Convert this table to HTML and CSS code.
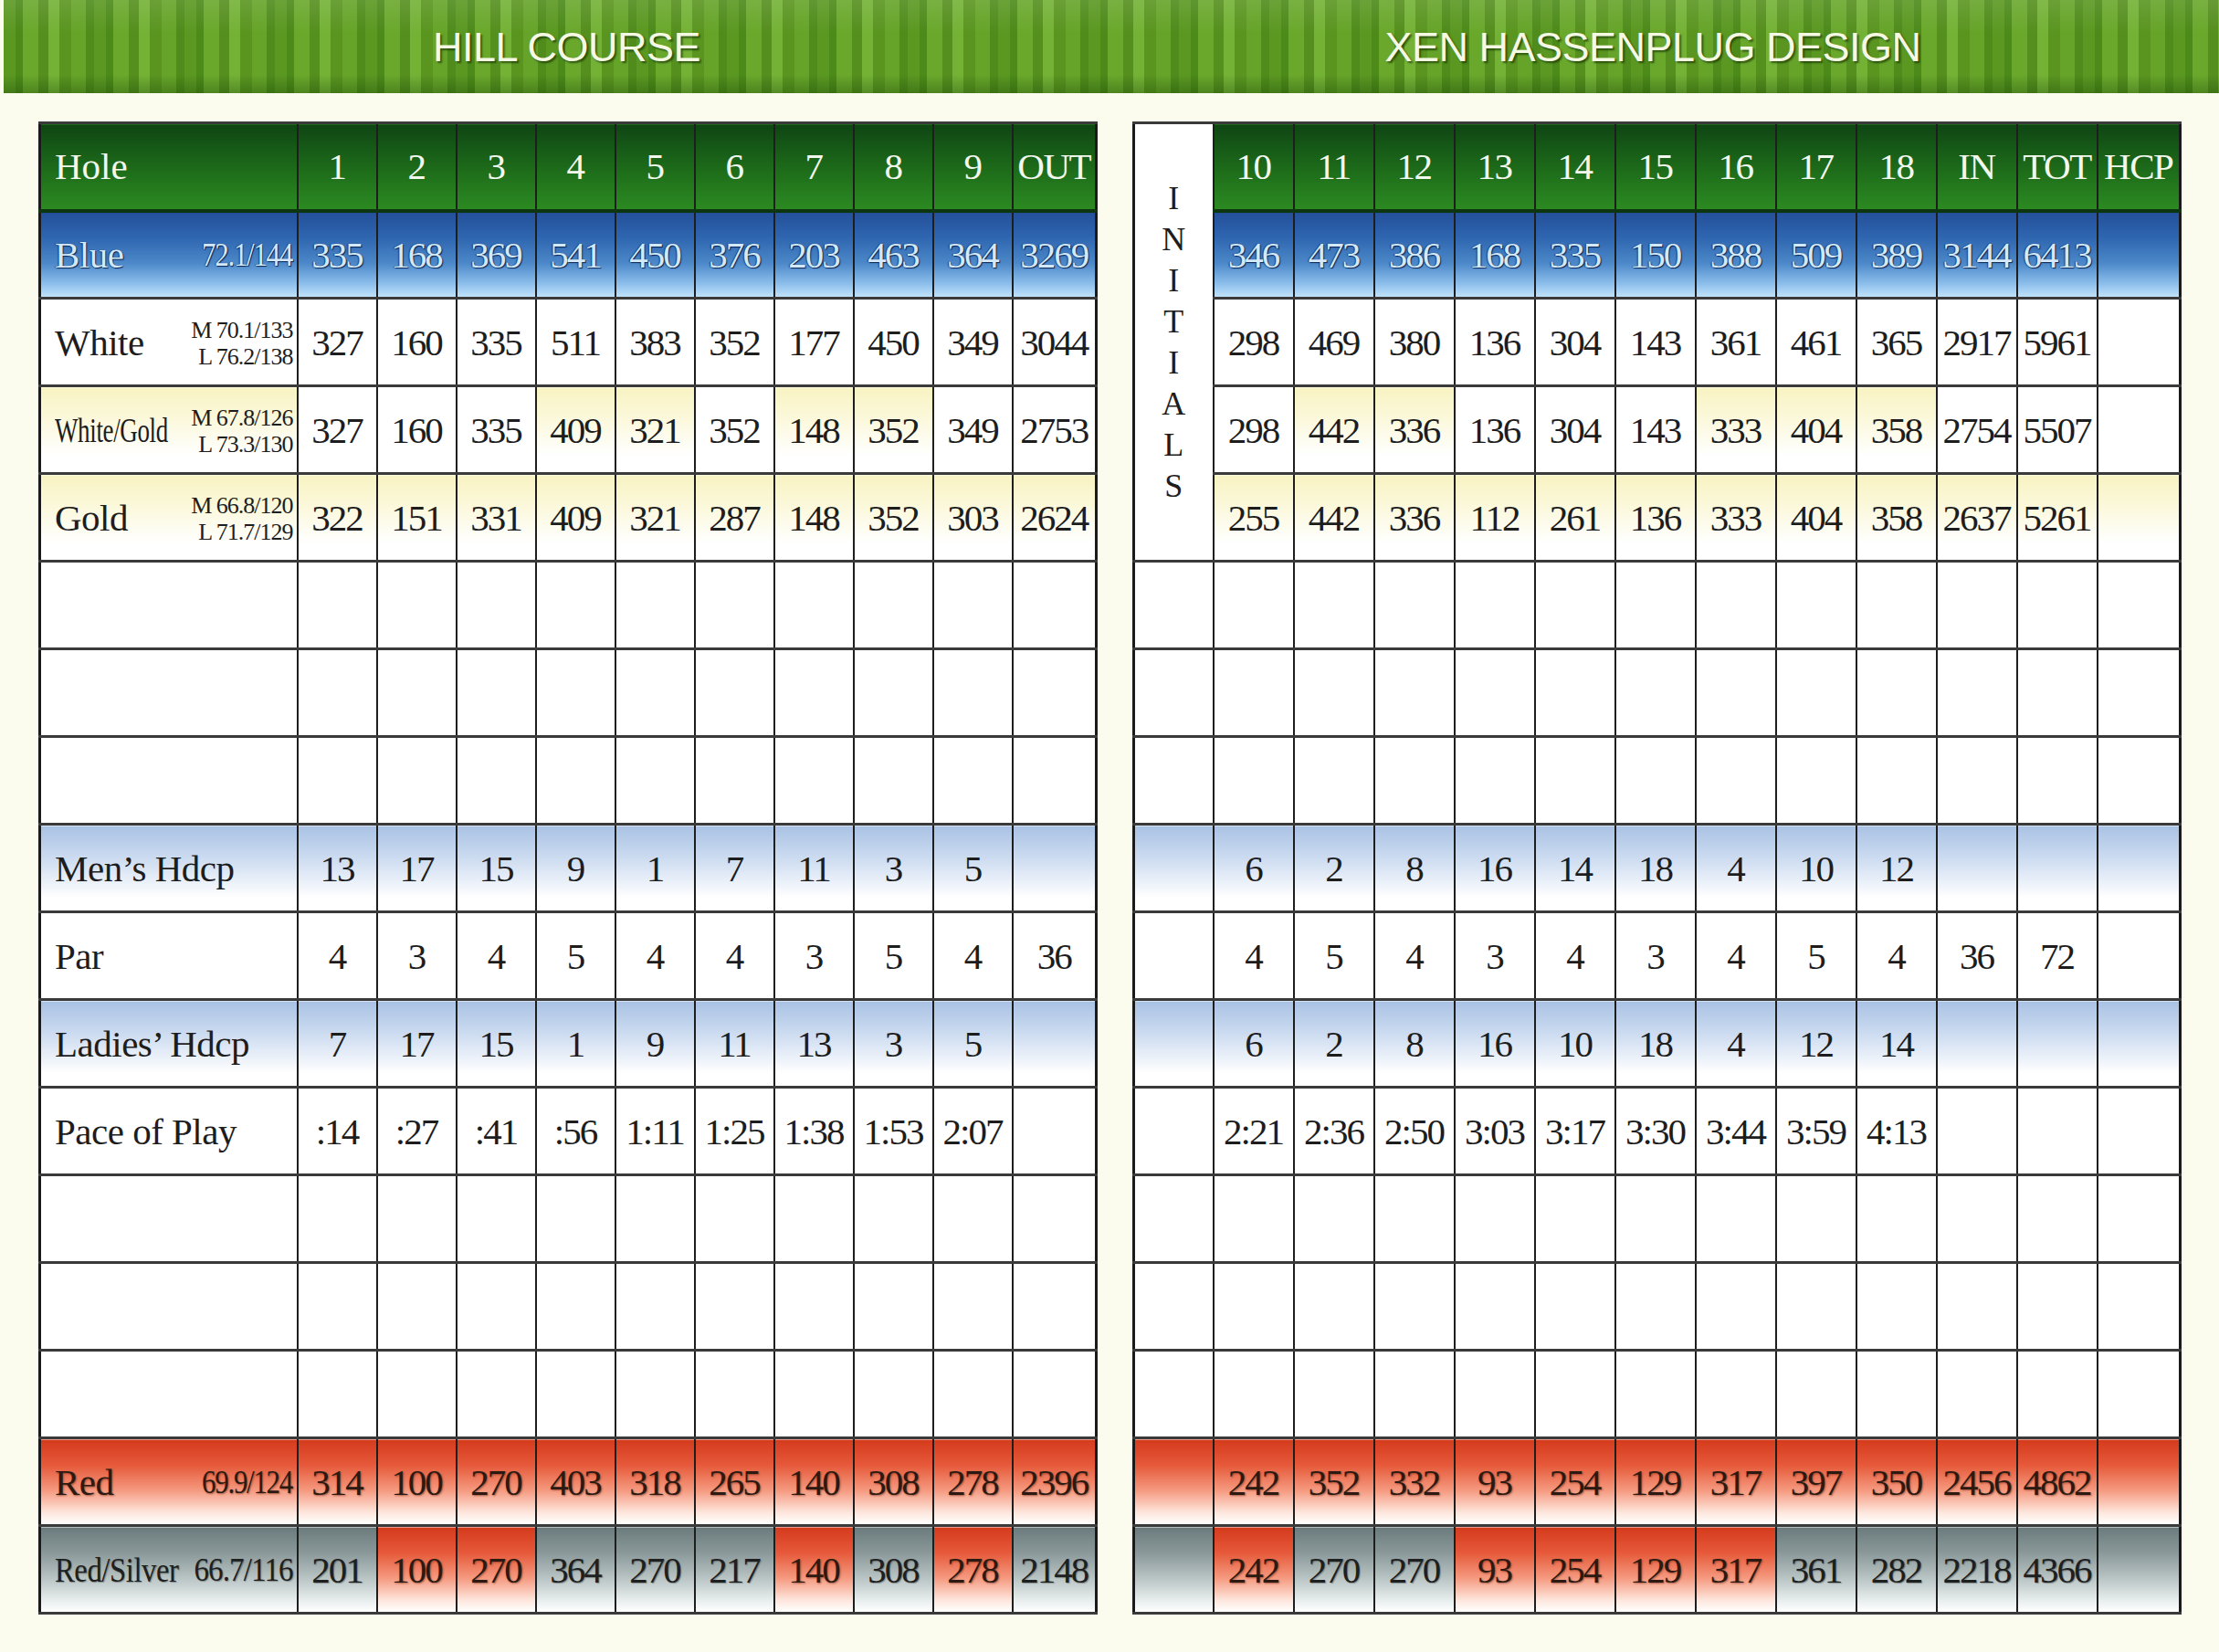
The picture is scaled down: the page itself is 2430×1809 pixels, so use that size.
FILE: index.html
```html
<!DOCTYPE html>
<html lang="en">
<head>
<meta charset="utf-8">
<title>Hill Course Scorecard</title>
<link rel="stylesheet" href="styles.css">
</head>
<body>
<div class="banner">
  <div class="banner-title left">HILL COURSE</div>
  <div class="banner-title right">XEN HASSENPLUG DESIGN</div>
</div>
<div class="cards">
  <table class="card front">
    <colgroup><col class="c-label"><col class="c-n"><col class="c-n"><col class="c-n"><col class="c-n"><col class="c-n"><col class="c-n"><col class="c-n"><col class="c-n"><col class="c-n"><col class="c-out"></colgroup>
    <tr class="g hdr"><td class="lbl"><div class="lab"><span>Hole</span></div></td><td>1</td><td>2</td><td>3</td><td>4</td><td>5</td><td>6</td><td>7</td><td>8</td><td>9</td><td>OUT</td></tr>
    <tr class="b"><td class="lbl"><div class="lab"><span>Blue</span><span class="cond rate">72.1/144</span></div></td><td>335</td><td>168</td><td>369</td><td>541</td><td>450</td><td>376</td><td>203</td><td>463</td><td>364</td><td>3269</td></tr>
    <tr><td class="lbl"><div class="lab"><span>White</span><span class="two"><span>M 70.1/133</span><span>L 76.2/138</span></span></div></td><td>327</td><td>160</td><td>335</td><td>511</td><td>383</td><td>352</td><td>177</td><td>450</td><td>349</td><td>3044</td></tr>
    <tr><td class="lbl y"><div class="lab"><span class="cond wg">White/Gold</span><span class="two"><span>M 67.8/126</span><span>L 73.3/130</span></span></div></td><td>327</td><td>160</td><td>335</td><td class="y">409</td><td class="y">321</td><td>352</td><td class="y">148</td><td class="y">352</td><td>349</td><td>2753</td></tr>
    <tr class="yr"><td class="lbl"><div class="lab"><span>Gold</span><span class="two"><span>M 66.8/120</span><span>L 71.7/129</span></span></div></td><td>322</td><td>151</td><td>331</td><td>409</td><td>321</td><td>287</td><td>148</td><td>352</td><td>303</td><td>2624</td></tr>
    <tr><td></td><td></td><td></td><td></td><td></td><td></td><td></td><td></td><td></td><td></td><td></td></tr>
    <tr><td></td><td></td><td></td><td></td><td></td><td></td><td></td><td></td><td></td><td></td><td></td></tr>
    <tr><td></td><td></td><td></td><td></td><td></td><td></td><td></td><td></td><td></td><td></td><td></td></tr>
    <tr class="lb"><td class="lbl"><div class="lab"><span>Men’s Hdcp</span></div></td><td>13</td><td>17</td><td>15</td><td>9</td><td>1</td><td>7</td><td>11</td><td>3</td><td>5</td><td></td></tr>
    <tr><td class="lbl"><div class="lab"><span>Par</span></div></td><td>4</td><td>3</td><td>4</td><td>5</td><td>4</td><td>4</td><td>3</td><td>5</td><td>4</td><td>36</td></tr>
    <tr class="lb"><td class="lbl"><div class="lab"><span>Ladies’ Hdcp</span></div></td><td>7</td><td>17</td><td>15</td><td>1</td><td>9</td><td>11</td><td>13</td><td>3</td><td>5</td><td></td></tr>
    <tr class="pace"><td class="lbl"><div class="lab"><span>Pace of Play</span></div></td><td>:14</td><td>:27</td><td>:41</td><td>:56</td><td>1:11</td><td>1:25</td><td>1:38</td><td>1:53</td><td>2:07</td><td></td></tr>
    <tr><td></td><td></td><td></td><td></td><td></td><td></td><td></td><td></td><td></td><td></td><td></td></tr>
    <tr><td></td><td></td><td></td><td></td><td></td><td></td><td></td><td></td><td></td><td></td><td></td></tr>
    <tr><td></td><td></td><td></td><td></td><td></td><td></td><td></td><td></td><td></td><td></td><td></td></tr>
    <tr class="r"><td class="lbl"><div class="lab"><span>Red</span><span class="cond rate">69.9/124</span></div></td><td>314</td><td>100</td><td>270</td><td>403</td><td>318</td><td>265</td><td>140</td><td>308</td><td>278</td><td>2396</td></tr>
    <tr class="rs"><td class="lbl s"><div class="lab"><span class="cond rsl">Red/Silver</span><span class="cond rate2">66.7/116</span></div></td><td class="s">201</td><td class="rr">100</td><td class="rr">270</td><td class="s">364</td><td class="s">270</td><td class="s">217</td><td class="rr">140</td><td class="s">308</td><td class="rr">278</td><td class="s">2148</td></tr>
  </table>

  <table class="card back">
    <colgroup><col class="c-init"><col class="c-m"><col class="c-m"><col class="c-m"><col class="c-m"><col class="c-m"><col class="c-m"><col class="c-m"><col class="c-m"><col class="c-m"><col class="c-m"><col class="c-m"><col class="c-hcp"></colgroup>
    <tr class="g hdr"><td rowspan="5" class="init"><div class="init-letters"><span>I</span><span>N</span><span>I</span><span>T</span><span>I</span><span>A</span><span>L</span><span>S</span></div></td><td>10</td><td>11</td><td>12</td><td>13</td><td>14</td><td>15</td><td>16</td><td>17</td><td>18</td><td>IN</td><td>TOT</td><td>HCP</td></tr>
    <tr class="b"><td>346</td><td>473</td><td>386</td><td>168</td><td>335</td><td>150</td><td>388</td><td>509</td><td>389</td><td>3144</td><td>6413</td><td></td></tr>
    <tr><td>298</td><td>469</td><td>380</td><td>136</td><td>304</td><td>143</td><td>361</td><td>461</td><td>365</td><td>2917</td><td>5961</td><td></td></tr>
    <tr><td>298</td><td class="y">442</td><td class="y">336</td><td>136</td><td>304</td><td>143</td><td class="y">333</td><td class="y">404</td><td class="y">358</td><td>2754</td><td>5507</td><td></td></tr>
    <tr class="yr"><td>255</td><td>442</td><td>336</td><td>112</td><td>261</td><td>136</td><td>333</td><td>404</td><td>358</td><td>2637</td><td>5261</td><td></td></tr>
    <tr><td></td><td></td><td></td><td></td><td></td><td></td><td></td><td></td><td></td><td></td><td></td><td></td><td></td></tr>
    <tr><td></td><td></td><td></td><td></td><td></td><td></td><td></td><td></td><td></td><td></td><td></td><td></td><td></td></tr>
    <tr><td></td><td></td><td></td><td></td><td></td><td></td><td></td><td></td><td></td><td></td><td></td><td></td><td></td></tr>
    <tr class="lb"><td></td><td>6</td><td>2</td><td>8</td><td>16</td><td>14</td><td>18</td><td>4</td><td>10</td><td>12</td><td></td><td></td><td></td></tr>
    <tr><td></td><td>4</td><td>5</td><td>4</td><td>3</td><td>4</td><td>3</td><td>4</td><td>5</td><td>4</td><td>36</td><td>72</td><td></td></tr>
    <tr class="lb"><td></td><td>6</td><td>2</td><td>8</td><td>16</td><td>10</td><td>18</td><td>4</td><td>12</td><td>14</td><td></td><td></td><td></td></tr>
    <tr class="pace"><td></td><td>2:21</td><td>2:36</td><td>2:50</td><td>3:03</td><td>3:17</td><td>3:30</td><td>3:44</td><td>3:59</td><td>4:13</td><td></td><td></td><td></td></tr>
    <tr><td></td><td></td><td></td><td></td><td></td><td></td><td></td><td></td><td></td><td></td><td></td><td></td><td></td></tr>
    <tr><td></td><td></td><td></td><td></td><td></td><td></td><td></td><td></td><td></td><td></td><td></td><td></td><td></td></tr>
    <tr><td></td><td></td><td></td><td></td><td></td><td></td><td></td><td></td><td></td><td></td><td></td><td></td><td></td></tr>
    <tr class="r"><td></td><td>242</td><td>352</td><td>332</td><td>93</td><td>254</td><td>129</td><td>317</td><td>397</td><td>350</td><td>2456</td><td>4862</td><td></td></tr>
    <tr class="rs"><td class="s"></td><td class="rr">242</td><td class="s">270</td><td class="s">270</td><td class="rr">93</td><td class="rr">254</td><td class="rr">129</td><td class="rr">317</td><td class="s">361</td><td class="s">282</td><td class="s">2218</td><td class="s">4366</td><td class="s"></td></tr>
  </table>
</div>
</body>
</html>
```

FILE: styles.css
```css
* { box-sizing: border-box; }
html, body { margin: 0; padding: 0; }
body {
  width: 2430px;
  height: 1809px;
  overflow: hidden;
  background: #fbfbee;
  font-family: "Liberation Serif", "Times New Roman", serif;
  color: #1d1d1d;
}

/* ---------- banner ---------- */
.banner {
  margin-left: 4px;
  height: 102px;
  display: grid;
  grid-template-columns: 1157px 1146px;
  column-gap: 38px;
  padding-left: 38px;
  background:
    linear-gradient(180deg, rgba(255,255,255,0.10) 0%, rgba(255,255,255,0) 35%, rgba(0,0,0,0) 80%, rgba(10,50,0,0.30) 100%),
    repeating-linear-gradient(90deg,
      #5b9822 0px, #5b9822 13px,
      #4c8a19 13px, #4c8a19 21px,
      #6aa82c 21px, #6aa82c 38px,
      #558f1e 38px, #558f1e 49px,
      #74b236 49px, #74b236 61px,
      #5a9520 61px, #5a9520 74px,
      #66a429 74px, #66a429 90px,
      #4f8c1b 90px, #4f8c1b 99px);
}
.banner-title {
  display: flex;
  align-items: center;
  justify-content: center;
  font-family: "Liberation Sans", Arial, sans-serif;
  font-size: 45px;
  letter-spacing: -0.5px;
  color: #f5f8e2;
  text-shadow: 2px 2px 2px rgba(15, 45, 0, 0.65);
  padding-top: 2px;
}

/* ---------- cards ---------- */
.cards {
  display: flex;
  align-items: flex-start;
  gap: 38px;
  padding: 31px 0 0 42px;
}
.card {
  border-collapse: collapse;
  table-layout: fixed;
  border: 3px solid #1a1a1a;
  background: #ffffff;
}
.front { width: 1157px; }
.back { width: 1146px; }
.c-label { width: 282px; }
.c-n { width: 87px; }
.c-out { width: 92px; }
.c-init { width: 87px; }
.c-m { width: 88px; }
.c-hcp { width: 91px; }

.card td {
  height: 96px;
  padding: 0;
  text-align: center;
  vertical-align: middle;
  border-left: 2px solid #1e1e1e;
  border-right: 2px solid #1e1e1e;
  border-top: 3px solid #3a3a3a;
  border-bottom: 3px solid #3a3a3a;
  font-size: 41px;
  letter-spacing: -2px;
  white-space: nowrap;
  overflow: hidden;
}
.card td.lbl { text-align: left; letter-spacing: -0.5px; }
.lab {
  display: flex;
  align-items: center;
  justify-content: space-between;
  padding: 0 4px 0 15px;
}
.cond { display: inline-block; transform-origin: left center; }
.rate { font-size: 36px; letter-spacing: -1.5px; transform: scaleX(0.86); transform-origin: right center; }
.rate2 { font-size: 36px; letter-spacing: -1px; transform: scaleX(0.92); transform-origin: right center; }
.wg { font-size: 38px; transform: scaleX(0.71); margin-right: -70px; }
.rsl { font-size: 38px; transform: scaleX(0.86); margin-right: -22px; }
.two {
  display: flex;
  flex-direction: column;
  align-items: flex-end;
  font-size: 26px;
  line-height: 29px;
  letter-spacing: -1px;
  padding-top: 2px;
}

/* header (green) */
.g td {
  background: linear-gradient(180deg, #0f4513 0%, #185f18 35%, #247a1c 75%, #2c8a22 100%);
  color: #f3f8ee;
  letter-spacing: -1.5px;
  border-bottom: 4px solid #0d3510;
}
.g td.lbl { letter-spacing: 0; }
.g td.init { background: #ffffff; color: #1d1d1d; border-bottom: 3px solid #3a3a3a; }

/* blue tee row */
.b td {
  background: linear-gradient(180deg, #24509a 0%, #2f66b0 30%, #4c88c9 60%, #8ec0ec 85%, #c0e2fb 100%);
  color: #d3e9fa;
  text-shadow: 1px 1px 1px #0b2450, -1px 0 1px rgba(10, 35, 80, 0.7);
}

/* yellow rows and cells */
.yr td, td.y {
  background: linear-gradient(180deg, #f8f3c2 0%, #fbf8da 35%, #ffffff 80%);
}

/* light blue handicap rows */
.lb td {
  background: linear-gradient(180deg, #a9c2e4 0%, #c9d9ef 35%, #ffffff 85%);
}

/* red rows / cells */
.r td, td.rr {
  background: linear-gradient(180deg, #d43a1c 0%, #e6593a 30%, #f59a80 60%, #fde4da 85%, #ffffff 100%);
  color: #2c1a12;
  text-shadow: 1px 1px 2px rgba(100, 30, 10, 0.55);
}
td.s {
  background: linear-gradient(180deg, #6b7b7d 0%, #8a9899 30%, #b9c4c4 60%, #e6ecec 85%, #ffffff 100%);
  color: #1e2020;
  text-shadow: 1px 1px 1px rgba(40, 50, 50, 0.4);
}

/* initials */
.init { background: #ffffff; }
.init-letters {
  display: flex;
  flex-direction: column;
  align-items: center;
  font-size: 36px;
  line-height: 45px;
  letter-spacing: 0;
  color: #1d1d1d;
}
```
